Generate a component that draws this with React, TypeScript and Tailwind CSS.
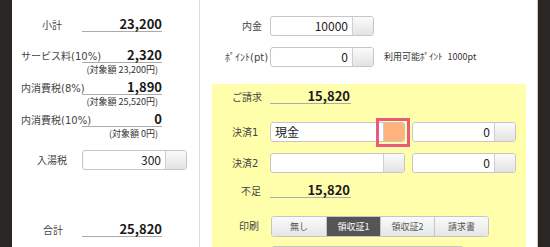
import React from 'react';

const jp = "font-['Noto_Sans_CJK_JP','Noto_Sans',sans-serif]";
const lbl = "font-['DejaVu_Sans','Noto_Sans_CJK_JP',sans-serif] text-[10px] text-[#444]";

type SumProps = {
  label: string;
  value: string;
  pad: string;
  sub?: string;
  top: string;
};

function SumRow({ label, value, pad, sub, top }: SumProps) {
  return (
    <div className={top}>
      <div className="flex items-baseline">
        <div className={`w-[70px] shrink-0 whitespace-nowrap ${lbl} ${pad}`}>{label}</div>
        <div className="h-[16px] w-[80px] border-b border-[#ababab] text-right text-[13px] font-bold leading-[15px] text-[#1a1a1a]">
          {value}
        </div>
      </div>
      {sub && (
        <div className="ml-[70px] w-[80px] whitespace-nowrap pr-[4px] text-right text-[9px] leading-[11px] text-[#333]">
          {sub}
        </div>
      )}
    </div>
  );
}

type FieldProps = {
  w: string;
  value?: string;
  left?: boolean;
  hot?: boolean;
};

function Field({ w, value = '', left, hot }: FieldProps) {
  return (
    <div className={`flex h-[20px] shrink-0 rounded-[3px] border border-[#c6c6c6] bg-white ${w}`}>
      <div
        className={`flex-1 px-[4px] text-[12px] leading-[18px] text-[#222] ${left ? 'text-left' : 'text-right'}`}
      >
        {value}
      </div>
      <div className="relative w-[21px] shrink-0">
        <div
          className={`h-full w-full rounded-r-[2px] border-l border-[#cfcfcf] ${
            hot ? 'bg-[#ffb27c]' : 'bg-gradient-to-b from-[#fbfbfb] to-[#e3e3e3]'
          }`}
        />
        {hot && (
          <div className="absolute -top-[5px] -bottom-[6px] -left-[7px] -right-[6px] border-[3px] border-[#ea5a7b]" />
        )}
      </div>
    </div>
  );
}

function Total({ label, value, pad, top }: { label: string; value: string; pad: string; top: string }) {
  return (
    <div className={`flex items-baseline ${top}`}>
      <div className={`w-[58px] shrink-0 whitespace-nowrap ${lbl} ${pad}`}>{label}</div>
      <div className="h-[16px] w-[81px] border-b border-[#ababab] pr-[1px] text-right text-[13px] font-bold leading-[15px] text-[#1a1a1a]">
        {value}
      </div>
    </div>
  );
}

export default function App() {
  const prints = ['無し', '領収証1', '領収証2', '請求書'];

  return (
    <div className={`flex h-[247px] w-[550px] overflow-hidden bg-[#2a2624] ${jp}`}>
      <div className="w-[12px] shrink-0" />

      {/* left: totals */}
      <div className="w-[188px] shrink-0 border-r border-[#dcdcdc] bg-white pt-[16px]">
        <SumRow top="" label="小計" value="23,200" pad="pl-[30px]" />
        <SumRow top="mt-[14px]" label="サービス料(10%)" value="2,320" pad="pl-[9px]" sub="(対象額 23,200円)" />
        <SumRow top="mt-[4px]" label="内消費税(8%)" value="1,890" pad="pl-[9px]" sub="(対象額 25,520円)" />
        <SumRow top="mt-[4px]" label="内消費税(10%)" value="0" pad="pl-[9px]" sub="(対象額 0円)" />
        <div className="mt-[11px] flex items-center">
          <div className={`w-[70px] shrink-0 pl-[25px] ${lbl}`}>入湯税</div>
          <Field w="w-[105px]" value="300" />
        </div>
        <SumRow top="mt-[51px]" label="合計" value="25,820" pad="pl-[31px]" />
      </div>

      {/* right: payment */}
      <div className="w-[338px] shrink-0 border-r border-[#c9c9c9] bg-white pt-[16px] pl-[12px] pr-[11px]">
        <div className="flex items-center">
          <div className={`w-[58px] shrink-0 pl-[30px] ${lbl}`}>内金</div>
          <Field w="w-[104px]" value="10000" />
        </div>
        <div className="mt-[11px] flex items-center">
          <div className={`w-[58px] shrink-0 whitespace-nowrap pl-[13px] ${lbl}`}>ﾎﾟｲﾝﾄ(pt)</div>
          <Field w="w-[104px]" value="0" />
          <div className="ml-[10px] flex gap-[5px] whitespace-nowrap text-[9px] text-[#333]">
            <span>利用可能ﾎﾟｲﾝﾄ</span>
            <span>1000pt</span>
          </div>
        </div>

        <div className="mt-[17px] h-[200px] bg-[#ffffab] pt-[4px]">
          <Total top="" label="ご請求" value="15,820" pad="pl-[20px]" />

          <div className="mt-[17px] flex items-center">
            <div className={`w-[58px] shrink-0 pl-[20px] ${lbl}`}>決済1</div>
            <Field w="w-[135px]" value="現金" left hot />
            <div className="w-[7px] shrink-0" />
            <Field w="w-[104px]" value="0" />
          </div>

          <div className="mt-[11px] flex items-center">
            <div className={`w-[58px] shrink-0 pl-[20px] ${lbl}`}>決済2</div>
            <Field w="w-[135px]" />
            <div className="w-[7px] shrink-0" />
            <Field w="w-[104px]" value="0" />
          </div>

          <Total top="mt-[9px]" label="不足" value="15,820" pad="pl-[29px]" />

          <div className="mt-[17px] flex items-center">
            <div className={`w-[59px] shrink-0 pl-[27px] ${lbl}`}>印刷</div>
            <div className="flex h-[21px] overflow-hidden rounded-[3px] border border-[#c6c6c6]">
              {prints.map((p, i) => (
                <div
                  key={p}
                  className={`flex w-[54px] items-center justify-center text-[9px] ${
                    i > 0 ? 'border-l border-[#c6c6c6]' : ''
                  } ${
                    i === 1
                      ? 'bg-[#555555] text-white'
                      : 'bg-gradient-to-b from-[#fafafa] to-[#e6e6e6] text-[#555]'
                  }`}
                >
                  {p}
                </div>
              ))}
            </div>
          </div>

          <div className="mt-[9px] flex">
            <div className="w-[59px] shrink-0" />
            <Field w="w-[193px]" />
          </div>
        </div>
      </div>

      <div className="flex-1" />
    </div>
  );
}
